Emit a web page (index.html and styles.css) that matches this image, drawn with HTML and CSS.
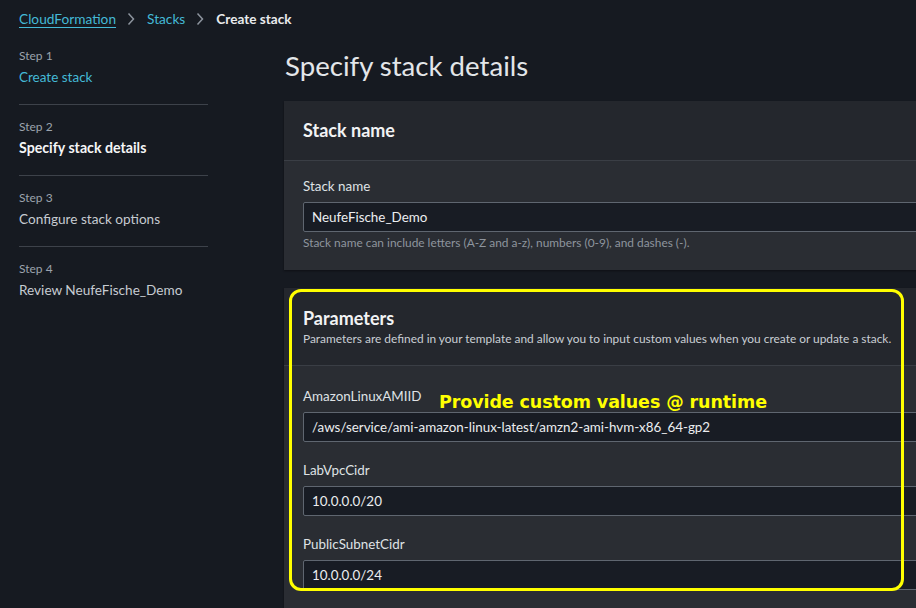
FILE: index.html
```html
<!DOCTYPE html>
<html lang="en">
<head>
<meta charset="utf-8">
<title>Specify stack details</title>
<link rel="stylesheet" href="styles.css">
</head>
<body>
<nav class="crumbs">
  <a class="crumb-link" href="#">CloudFormation</a>
  <svg class="chev" viewBox="0 0 8 14" width="8" height="14"><path d="M1.5 1.5l5 5.5-5 5.5" fill="none" stroke="#8d949e" stroke-width="1.5"/></svg>
  <span class="crumb-plain">Stacks</span>
  <svg class="chev" viewBox="0 0 8 14" width="8" height="14"><path d="M1.5 1.5l5 5.5-5 5.5" fill="none" stroke="#8d949e" stroke-width="1.5"/></svg>
  <span class="crumb-current">Create stack</span>
</nav>
<div class="layout">
  <aside class="steps">
    <div class="step">
      <div class="step-num">Step 1</div>
      <div class="step-name link">Create stack</div>
    </div>
    <div class="step">
      <div class="step-num">Step 2</div>
      <div class="step-name active">Specify stack details</div>
    </div>
    <div class="step">
      <div class="step-num">Step 3</div>
      <div class="step-name">Configure stack options</div>
    </div>
    <div class="step">
      <div class="step-num">Step 4</div>
      <div class="step-name">Review NeufeFische_Demo</div>
    </div>
  </aside>
  <main class="main">
    <h1 class="title">Specify stack details</h1>
    <section class="card card-stack">
      <div class="card-head">
        <h2 class="card-title">Stack name</h2>
      </div>
      <div class="card-body">
        <label class="field-label">Stack name</label>
        <div class="input">NeufeFische_Demo</div>
        <div class="hint">Stack name can include letters (A-Z and a-z), numbers (0-9), and dashes (-).</div>
      </div>
    </section>
    <section class="card card-params">
      <div class="card-head">
        <h2 class="card-title">Parameters</h2>
        <p class="card-desc">Parameters are defined in your template and allow you to input custom values when you create or update a stack.</p>
      </div>
      <div class="card-body params">
        <div class="field">
          <label class="field-label">AmazonLinuxAMIID</label>
          <div class="input">/aws/service/ami-amazon-linux-latest/amzn2-ami-hvm-x86_64-gp2</div>
        </div>
        <div class="field">
          <label class="field-label">LabVpcCidr</label>
          <div class="input">10.0.0.0/20</div>
        </div>
        <div class="field">
          <label class="field-label">PublicSubnetCidr</label>
          <div class="input">10.0.0.0/24</div>
        </div>
      </div>
      <div class="highlight"></div>
      <div class="note">Provide custom values @ runtime</div>
    </section>
  </main>
</div>
</body>
</html>
```
FILE: styles.css
```css
* { box-sizing: border-box; }
html, body {
  margin: 0;
  padding: 0;
  background: #161a21;
  overflow: hidden;
}
body {
  width: 916px;
  height: 608px;
  font-family: "Lato", "Open Sans", sans-serif;
  color: #d1d5db;
}
.crumbs {
  display: flex;
  align-items: center;
  padding: 9px 19px 0;
  height: 29px;
  font-size: 13.7px;
  line-height: 20px;
}
.crumb-link {
  color: #44b9d6;
  text-decoration: underline;
  text-underline-offset: 3px;
}
.crumb-plain { color: #44b9d6; }
.crumb-current { color: #e9ebed; font-weight: 700; font-size: 13.6px; }
.chev { display: block; margin: 0 12px 0 11px; }
.layout {
  display: flex;
  width: 1100px;
}
.steps {
  width: 189px;
  margin: 19px 0 0 19px;
  flex: none;
}
.step {
  padding: 14px 0 17px;
  border-top: 1px solid #3d424a;
}
.step:first-child {
  padding-top: 0;
  border-top: none;
}
.step-num {
  font-size: 12px;
  line-height: 16px;
  color: #9ba3ad;
}
.step-name {
  margin-top: 3px;
  font-size: 13.6px;
  line-height: 20px;
  color: #c6cbd1;
}
.step-name.link { color: #44b9d6; font-size: 13.5px; }
.step-name.active { color: #f5f6f7; font-weight: 700; font-size: 14.2px; }
.main {
  margin-left: 76px;
  flex: 1;
}
.title {
  margin: 21px 0 19px 1px;
  font-size: 27.6px;
  line-height: 32px;
  font-weight: 400;
  color: #e3e6e9;
}
.card {
  background: #2a2d33;
  box-shadow: 0 1px 2px rgba(0,0,0,0.4);
}
.card-stack { margin-bottom: 18px; }
.card-head {
  background: #24272d;
  padding: 18px 19px 19px;
  border-bottom: 1px solid #3a3e45;
}
.card-title {
  margin: 0;
  font-size: 18px;
  line-height: 22px;
  font-weight: 700;
  color: #f2f3f4;
}
.card-desc {
  margin: 2px 0 0;
  font-size: 11.9px;
  line-height: 16px;
  color: #c9ced4;
}
.card-params .card-head { padding: 19px 19px 18px; }
.card-body {
  padding: 15px 19px 19px;
}
.field-label {
  display: block;
  font-size: 13.4px;
  line-height: 20px;
  color: #dfe2e5;
  margin-bottom: 6px;
}
.input {
  height: 30px;
  padding: 0 8px;
  border: 1px solid #5f6670;
  border-radius: 2px;
  background: #181c24;
  font-size: 13.4px;
  line-height: 28px;
  color: #eceef0;
  white-space: nowrap;
}
.hint {
  margin-top: 3px;
  font-size: 11.9px;
  line-height: 16px;
  color: #8e959e;
}
.card-params { position: relative; height: 400px; }
.params {
  padding-top: 20px;
  display: flex;
  flex-direction: column;
  gap: 18px;
}
.highlight {
  position: absolute;
  left: 5px;
  top: 1px;
  width: 615px;
  height: 302px;
  border: 3px solid #ffff00;
  border-radius: 12px;
}
.note {
  position: absolute;
  left: 155px;
  top: 102px;
  font-family: "DejaVu Sans", sans-serif;
  font-weight: 700;
  font-size: 17.5px;
  letter-spacing: -0.1px;
  line-height: 24px;
  color: #ffff00;
}
```
